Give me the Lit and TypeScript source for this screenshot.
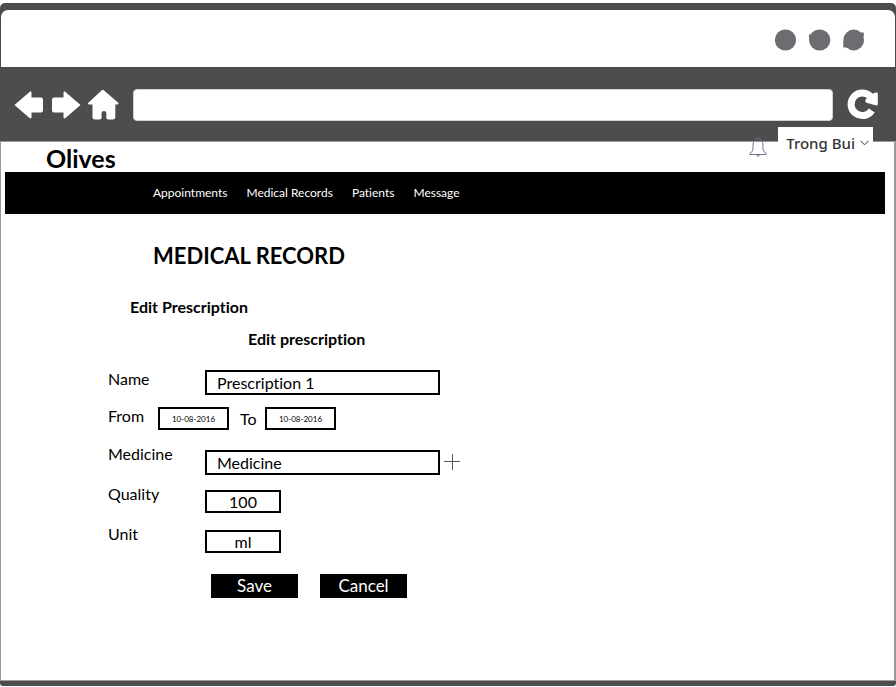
import { LitElement, html, css } from "lit";
import { customElement } from "lit/decorators.js";

@customElement("browser-toolbar")
export class BrowserToolbar extends LitElement {
  static styles = css`
    :host { display: block; }
    .title-bar {
      box-sizing: border-box;
      height: 57px;
      display: flex;
      align-items: center;
      justify-content: flex-end;
      padding: 2px 30px 0 0;
      background: #fff;
      border-radius: 7px 7px 0 0;
      margin: 0 1px;
    }
    .tools {
      box-sizing: border-box;
      height: 74px;
      display: flex;
      align-items: center;
      padding: 2px 17px 0 14px;
      background: #4d4d4d;
    }
    button { display: block; padding: 0; border: 0; background: none; color: #fff; }
    svg { display: block; fill: currentColor; }
    .nav { display: flex; gap: 7px; }
    input {
      flex: 1;
      min-width: 0;
      box-sizing: border-box;
      height: 32px;
      margin: 0 14px;
      padding: 0 12px;
      border: 1px solid #d0d0d0;
      border-radius: 4px;
      background: #fff;
      font: 16px Lato, sans-serif;
    }
    .dots { color: #6c6d70; }
  `;

  render() {
    return html`
      <div class="title-bar">
        <svg class="dots" width="90" height="22" viewBox="0 0 90 22" aria-hidden="true">
          <circle cx="10.500" cy="11" r="10.600" />
          <circle cx="44.700" cy="11" r="10.600" />
          <path d="M34 5.500h4v4h-4Z" />
          <circle cx="78.700" cy="11" r="10.400" />
          <path d="M84 3.500h4.800v4H84ZM68.300 12h4v6.500h-4Z" />
        </svg>
      </div>
      <div class="tools">
        <div class="nav">
          <button aria-label="Back">
            <svg width="30" height="32" viewBox="0 0 30 32">
              <path d="M.5 16 15.500 3c1-.8 2-.3 2 .8V8.500h9.500q2 0 2 2v11q0 2-2 2h-9.500v4.700c0 1.100-1 1.600-2 .8Z" />
            </svg>
          </button>
          <button aria-label="Forward">
            <svg width="30" height="32" viewBox="0 0 30 32">
              <path d="M29.500 16 14.500 3c-1-.8-2-.3-2 .8V8.500H3q-2 0-2 2v11q0 2 2 2h9.500v4.700c0 1.100 1 1.600 2 .8Z" />
            </svg>
          </button>
          <button aria-label="Home">
            <svg width="31" height="32" viewBox="0 0 31 32">
              <path d="M13.800 1.200q1-.8 2 0L30.200 13.700q.8 1.300-.7 1.700H27.300V28q0 2.500-2.500 2.500h-4.500q-2 0-2-2V24q0-2-2.300-2T13.600 24v4.500q0 2-2 2H7Q4.500 30.500 4.500 28V15.400H1Q-.5 15 .3 13.700Z" />
            </svg>
          </button>
        </div>
        <input type="text" aria-label="Address" />
        <button aria-label="Reload">
          <svg width="32" height="32" viewBox="0 0 32 32">
            <path d="M24.800 21.500A11.300 11.300 0 1 1 24 8" fill="none" stroke="currentColor" stroke-width="7" />
            <path d="M30.800 4.500V15q0 1.500-1.500 1.500L19.500 13.800q-2-1-1-3L22 6l3-1 3.500-1.500Q30.800 3 30.800 4.500Z" />
          </svg>
        </button>
      </div>
    `;
  }
}

@customElement("prescription-form")
export class PrescriptionForm extends LitElement {
  static styles = css`
    :host { display: block; }
    form {
      display: grid;
      grid-template-rows: 37px 38px 40px 40px 49px 24px;
      padding-left: 107px;
      font-size: 16px;
      line-height: 18px;
    }
    .row { display: flex; align-items: flex-start; min-width: 0; }
    .row > .caption { width: 97px; flex: none; }
    .lower > input, .lower > button { margin-top: 5px; }
    input {
      box-sizing: border-box;
      height: 23px;
      margin: 0;
      padding: 0 10px;
      border: 2px solid #000;
      border-radius: 0;
      background: #fff;
      color: #000;
      font: inherit;
    }
    .wide { width: 235px; height: 25px; }
    .small { width: 76px; text-align: center; }
    .dates > .from { width: 50px; }
    .dates > .to { width: 36px; padding-left: 11px; box-sizing: border-box; line-height: 24px; }
    .date { width: 71px; padding: 0; text-align: center; font-size: 8px; }
    .add { display: block; width: 24px; height: 24px; padding: 0 4px; border: 0; background: none; color: #555; }
    .add svg { display: block; }
    .actions { display: flex; gap: 22px; padding-left: 103px; }
    .actions button {
      width: 87px;
      height: 24px;
      padding: 0;
      border: 0;
      background: #000;
      color: #fff;
      font: inherit;
      font-size: 17px;
    }
  `;

  render() {
    return html`
      <form @submit=${(e: Event) => e.preventDefault()}>
        <div class="row">
          <label class="caption" for="name">Name</label>
          <input class="wide" id="name" type="text" value="Prescription 1" />
        </div>
        <div class="row dates">
          <label class="from" for="from">From</label>
          <input class="date" id="from" type="text" value="10-08-2016" />
          <label class="to" for="to">To</label>
          <input class="date" id="to" type="text" value="10-08-2016" />
        </div>
        <div class="row lower">
          <label class="caption" for="medicine">Medicine</label>
          <input class="wide" id="medicine" type="text" value="Medicine" />
          <button class="add" type="button" aria-label="Add medicine">
            <svg width="16" height="16" viewBox="0 0 16 16" stroke="currentColor">
              <path d="M8.500 0V16M0 7.500H16" />
            </svg>
          </button>
        </div>
        <div class="row lower">
          <label class="caption" for="quality">Quality</label>
          <input class="small" id="quality" type="text" value="100" />
        </div>
        <div class="row lower">
          <label class="caption" for="unit">Unit</label>
          <input class="small" id="unit" type="text" value="ml" />
        </div>
        <div class="actions">
          <button type="submit">Save</button>
          <button type="button">Cancel</button>
        </div>
      </form>
    `;
  }
}

@customElement("app-root")
export class AppRoot extends LitElement {
  static styles = css`
    :host {
      display: flex;
      flex-direction: column;
      box-sizing: border-box;
      min-height: 100vh;
      padding: 3px 0 1px;
      background: #fff;
      color: #000;
      font-family: Lato, sans-serif;
      font-variant-ligatures: none;
    }
    .window {
      flex: 1;
      display: flex;
      flex-direction: column;
      padding: 7px 0 5px;
      background: #4d4d4d;
      border-radius: 5px 5px 3px 3px;
    }
    .page {
      flex: 1;
      border: solid #999;
      border-width: 1px 2px 1px 1px;
      background: #fff;
    }
    header {
      position: relative;
      height: 30px;
      padding-left: 45px;
    }
    .brand { font-size: 25px; line-height: 32px; font-weight: 700; }
    .account {
      position: absolute;
      top: -15px;
      right: 21px;
      display: flex;
      align-items: flex-start;
      gap: 11px;
    }
    .bell, .user { display: block; padding: 0; border: 0; background: none; }
    .bell { margin-top: 10px; }
    .bell svg, .user svg { display: block; }
    .user {
      display: flex;
      align-items: center;
      gap: 5px;
      height: 32px;
      padding: 0 4px 0 8px;
      background: #fff;
      color: #333;
      font: 500 15px "Noto Sans", sans-serif;
    }
    nav {
      display: flex;
      align-items: center;
      gap: 19px;
      height: 42px;
      margin: 0 9px 0 4px;
      padding-left: 148px;
      background: #000;
    }
    nav a { color: #fff; font-size: 12px; line-height: 16px; text-decoration: none; }
    h1, h2, h3 { margin: 0; font-weight: 700; }
    h1 { padding: 28px 0 0 152px; font-size: 22px; line-height: 28px; }
    h2, h3 { font-size: 16px; line-height: 20px; }
    h2 { padding: 27px 0 0 129px; }
    h3 { padding: 12px 0 21px 247px; }
  `;

  render() {
    return html`
      <div class="window">
        <browser-toolbar></browser-toolbar>
        <div class="page">
          <header>
            <div class="brand">Olives</div>
            <div class="account">
              <button class="bell" aria-label="Notifications">
                <svg width="18" height="20" viewBox="0 0 18 20" fill="none" stroke="#77718f">
                  <path d="M9 1.500Q4 2.500 4 8v4.500Q3.500 15 .8 16.500v1h16.400v-1Q14.500 15 14 12.500V8Q14 2.500 9 1.500ZM7 17.500q2 3.500 4 0" />
                </svg>
              </button>
              <button class="user">
                Trong Bui
                <svg width="9" height="6" viewBox="0 0 9 6" fill="none" stroke="#333">
                  <path d="M.5.8 4.500 4.800 8.500.8" />
                </svg>
              </button>
            </div>
          </header>
          <nav>
            <a href="#appointments">Appointments</a>
            <a href="#records">Medical Records</a>
            <a href="#patients">Patients</a>
            <a href="#message">Message</a>
          </nav>
          <main>
            <h1>MEDICAL RECORD</h1>
            <h2>Edit Prescription</h2>
            <h3>Edit prescription</h3>
            <prescription-form></prescription-form>
          </main>
        </div>
      </div>
    `;
  }
}
